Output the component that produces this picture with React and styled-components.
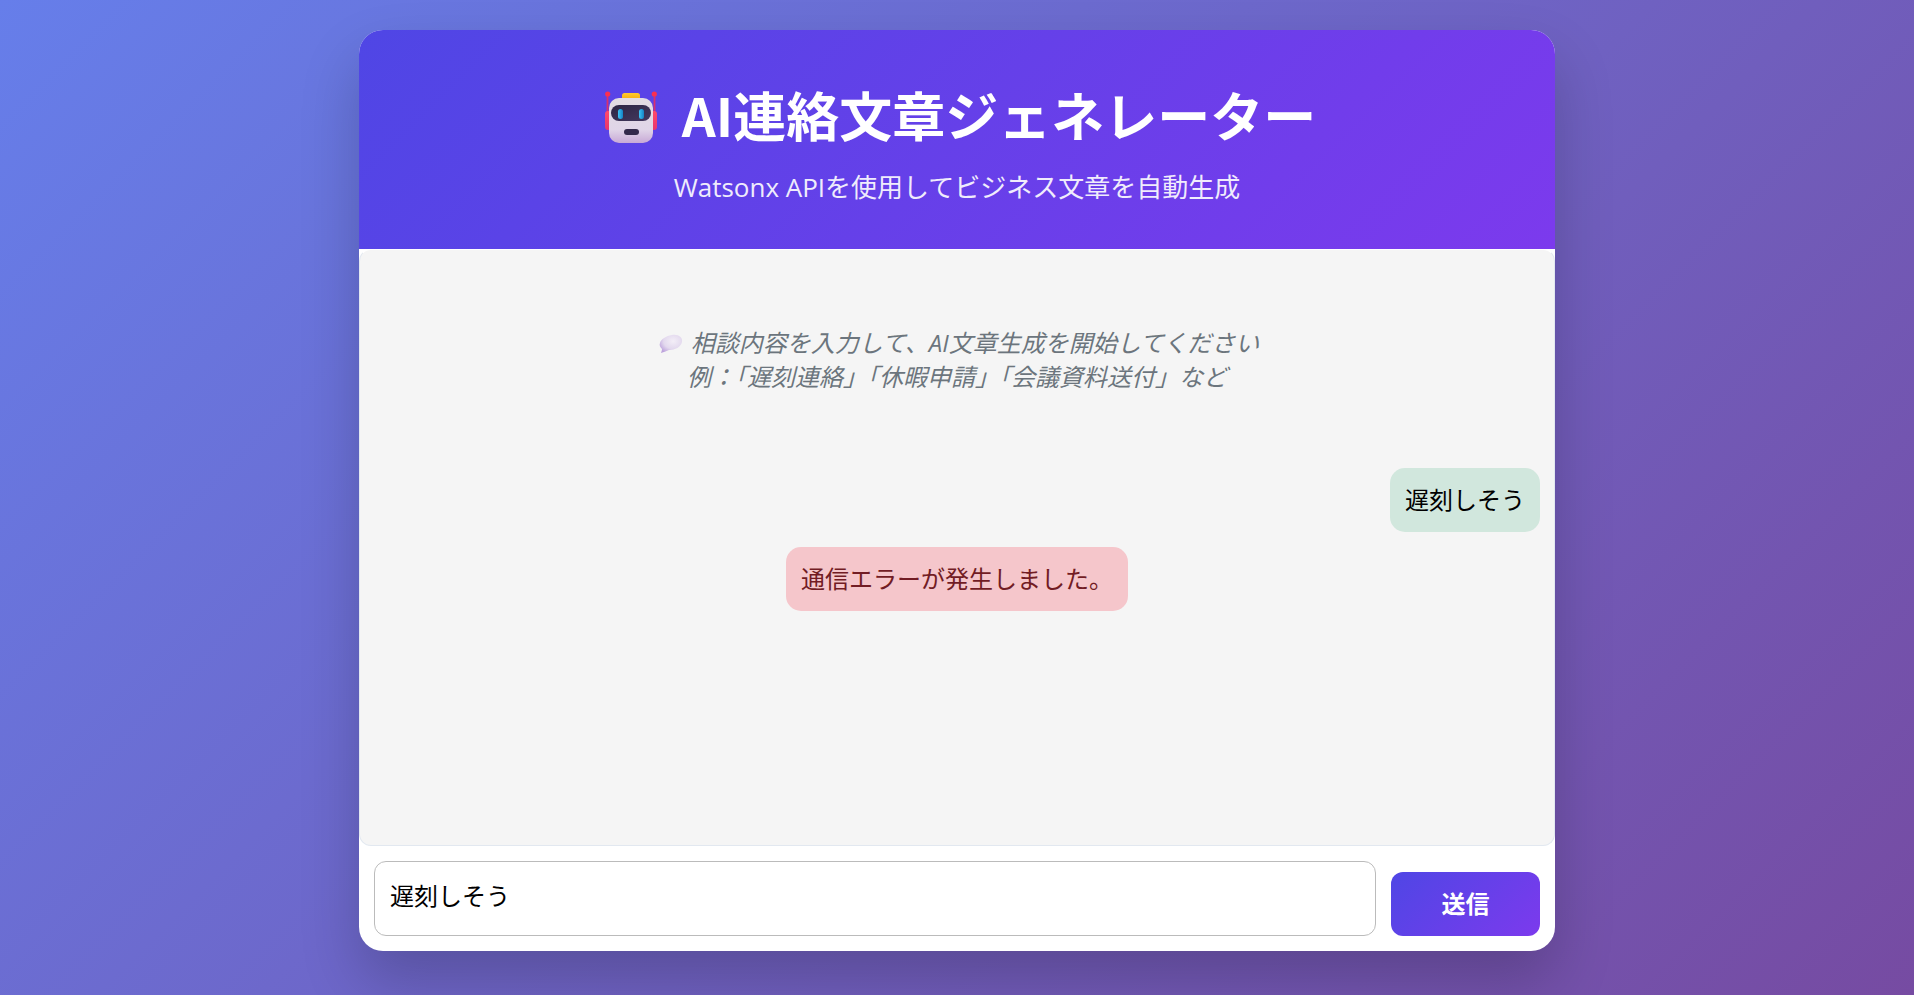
import React, { useState } from "react";
import styled, { createGlobalStyle } from "styled-components";

const App = () => {
    const [text, setText] = useState("遅刻しそう");
    const [messages, setMessages] = useState([
        { role: "user", body: "遅刻しそう" },
        { role: "error", body: "通信エラーが発生しました。" },
    ]);

    const handleSubmit = (e) => {
        e.preventDefault();
        if (!text.trim()) return;
        setMessages([...messages, { role: "user", body: text }]);
    };

    return (
        <>
            <GlobalStyle />
            <Card>
                <Header>
                    <Title>
                        <RobotIcon />
                        <span>AI連絡文章ジェネレーター</span>
                    </Title>
                    <Subtitle>Watsonx APIを使用してビジネス文章を自動生成</Subtitle>
                </Header>
                <Chat>
                    <Placeholder>
                        <BalloonIcon />
                        相談内容を入力して、AI文章生成を開始してください
                        <br />
                        例：「遅刻連絡」「休暇申請」「会議資料送付」など
                    </Placeholder>
                    {messages.map((m, i) => (
                        <Message key={i} $role={m.role}>{m.body}</Message>
                    ))}
                </Chat>
                <Form onSubmit={handleSubmit}>
                    <TextBox
                        aria-label="相談内容"
                        rows={1}
                        value={text}
                        onChange={(e) => setText(e.target.value)}
                    />
                    <SendButton type="submit">送信</SendButton>
                </Form>
            </Card>
        </>
    )
}

const RobotIcon = () => (
    <RobotSvg viewBox="-6 -8 64 62" aria-hidden="true">
        <defs>
            <linearGradient id="face" x1="0" y1="0" x2="0" y2="1">
                <stop offset="0" stopColor="#e2dce2" />
                <stop offset="0.7" stopColor="#e0d5e8" />
                <stop offset="1" stopColor="#c8a9d6" />
            </linearGradient>
            <linearGradient id="visor" x1="0" y1="0" x2="1" y2="1">
                <stop offset="0" stopColor="#2c2543" />
                <stop offset="1" stopColor="#44395f" />
            </linearGradient>
            <linearGradient id="ear" x1="0" y1="0" x2="0" y2="1">
                <stop offset="0" stopColor="#ff4a6a" />
                <stop offset="1" stopColor="#e8356f" />
            </linearGradient>
            <linearGradient id="lamp" x1="0" y1="0" x2="0" y2="1">
                <stop offset="0" stopColor="#ffcb2e" />
                <stop offset="1" stopColor="#f0a000" />
            </linearGradient>
            <linearGradient id="eye" x1="0" y1="0" x2="1" y2="0">
                <stop offset="0" stopColor="#3cc4f5" />
                <stop offset="1" stopColor="#1583c4" />
            </linearGradient>
        </defs>
        <path d="M3.5 4v20M50.5 4v20" stroke="#d8306e" strokeWidth="1.8" />
        <circle cx="3.7" cy="3" r="2.6" fill="#fb2f4f" />
        <circle cx="50.3" cy="3" r="2.6" fill="#fb2f4f" />
        <rect x="1" y="20" width="8" height="19" rx="3" fill="url(#ear)" />
        <rect x="45" y="20" width="8" height="19" rx="3" fill="url(#ear)" />
        <rect x="18" y="2" width="18" height="9" rx="2.5" fill="url(#lamp)" />
        <rect x="5" y="7" width="44" height="45" rx="10" fill="url(#face)" />
        <rect x="7" y="14" width="40" height="16" rx="8" fill="url(#visor)" />
        <rect x="14" y="18" width="5" height="10" rx="2.5" fill="url(#eye)" />
        <rect x="35" y="18" width="5" height="10" rx="2.5" fill="url(#eye)" />
        <rect x="20" y="38" width="15" height="6" rx="3" fill="#33294b" />
    </RobotSvg>
)

const BalloonIcon = () => (
    <BalloonSvg viewBox="0 0 24 20" aria-hidden="true">
        <defs>
            <radialGradient id="balloon" cx="0.6" cy="0.35" r="0.7">
                <stop offset="0" stopColor="#f3eef7" />
                <stop offset="0.6" stopColor="#e3d9ee" />
                <stop offset="1" stopColor="#bda3dc" />
            </radialGradient>
        </defs>
        <path
            d="M13 1C19 0 24 3 23 8C22 13 16 16 10 16C8 17 5 18 2 19C2 18 3 17 3 15C1 13 0 11 1 9C2 5 7 2 13 1Z"
            fill="url(#balloon)"
        />
    </BalloonSvg>
)

const GlobalStyle = createGlobalStyle`
    * {
        box-sizing: border-box;
    }

    body {
        margin: 0;
        font-family: "Open Sans", "Noto Sans CJK JP", sans-serif;
        font-size: 24px;
        line-height: 34px;
    }

    #root {
        min-height: 100vh;
        padding: 30px;
        background: linear-gradient(135deg, #667eea 0%, #764ba2 100%);
    }
`

const Card = styled.main`
    max-width: 1196px;
    min-height: calc(100vh - 74px);
    margin: 0 auto;
    display: flex;
    flex-direction: column;
    background: white;
    border-radius: 24px;
    overflow: hidden;
    box-shadow: 0 30px 60px rgba(0, 0, 0, 0.2);
`

const Header = styled.header`
    padding: 48px 30px 44px;
    text-align: center;
    color: white;
    background: linear-gradient(135deg, #4f46e5 0%, #7c3aed 100%);
`

const Title = styled.h1`
    display: flex;
    align-items: center;
    justify-content: center;
    gap: 20px;
    margin: 0 0 19px;
    font-family: "Noto Sans CJK JP", sans-serif;
    font-size: 53px;
    line-height: 72px;
    font-weight: 700;
`

const Subtitle = styled.p`
    margin: 0;
    font-size: 26px;
    line-height: 36px;
    opacity: 0.9;
`

const Chat = styled.section`
    flex: 1;
    display: flex;
    flex-direction: column;
    gap: 15px;
    padding: 14px;
    background: #f5f5f5;
    border: 1px solid #e2e8f0;
    border-top-color: white;
    border-radius: 12px;
`

const Placeholder = styled.p`
    margin: 0;
    padding: 62px 60px 59px;
    text-align: center;
    font-style: italic;
    color: #6c757d;
`

const Message = styled.div`
    max-width: 80%;
    padding: 15px;
    border-radius: 15px;
    align-self: ${props => props.$role === "user" ? "flex-end" : "center"};
    color: ${props => props.$role === "user" ? "black" : "#721c24"};
    background: ${props => props.$role === "user" ? "#d1e7dd" : "#f5c6cb"};
`

const Form = styled.form`
    display: flex;
    align-items: flex-end;
    gap: 15px;
    padding: 15px;
`

const TextBox = styled.textarea`
    flex: 1;
    height: 75px;
    padding: 17px 15px;
    border: 1px solid #bbbbbb;
    border-radius: 12px;
    font: inherit;
    color: black;
    resize: none;
    outline: none;
`

const SendButton = styled.button`
    width: 149px;
    height: 64px;
    border: none;
    border-radius: 12px;
    font: inherit;
    font-weight: 700;
    color: white;
    background: linear-gradient(135deg, #4f46e5 0%, #7c3aed 100%);
    cursor: pointer;
`

const RobotSvg = styled.svg`
    width: 64px;
    height: 62px;
`

const BalloonSvg = styled.svg`
    width: 24px;
    height: 20px;
    margin: 0 8px 0 4px;
    vertical-align: -2px;
`

export default App
